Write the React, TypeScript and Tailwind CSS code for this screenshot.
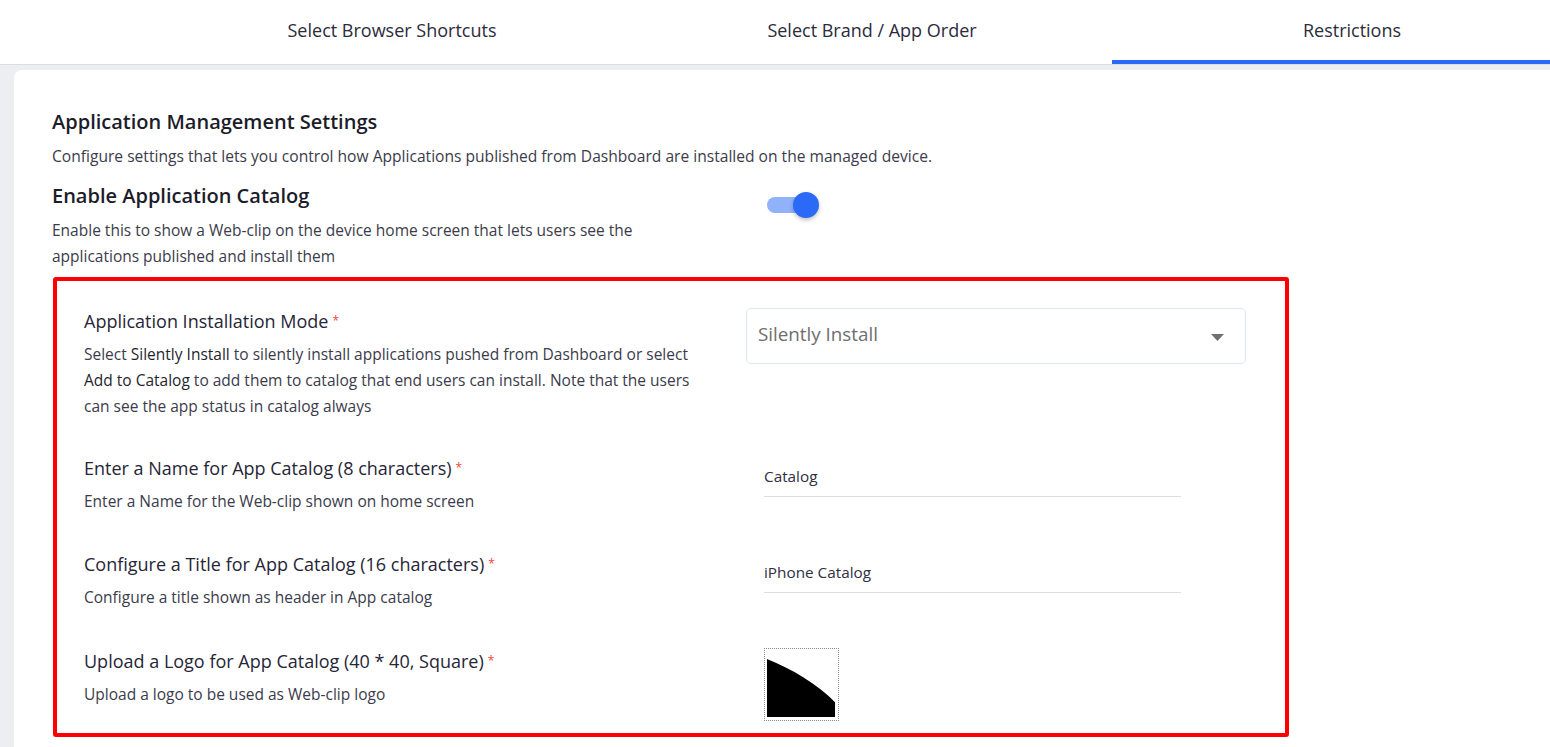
import React from "react";

// ── Data ─────────────────────────────────────────────────────────────────────

const TABS = [
  { id: "shortcuts", label: "Select Browser Shortcuts" },
  { id: "order", label: "Select Brand / App Order" },
  { id: "restrictions", label: "Restrictions" },
];

const ACTIVE_TAB = "restrictions";

// ── Sub-components ───────────────────────────────────────────────────────────

function Required() {
  return <span className="ml-[4px] text-[12px] text-[#f0443a] align-top">*</span>;
}

function FieldLabel({ title, children }: { title: string; children: React.ReactNode }) {
  return (
    <div className="w-[662px] shrink-0 pr-[37px]">
      <p className="text-[18px] leading-[26px] text-[#262637]">
        {title}
        <Required />
      </p>
      <p className="mt-[7px] text-[15.5px] leading-[26px] text-[#3b3b4b]">{children}</p>
    </div>
  );
}

function TextField({ value }: { value: string }) {
  return (
    <div className="self-start ml-[18px] w-[417px] pt-[10px] pb-[9px] border-b border-[#dedede] text-[15.3px] leading-[22px] text-[#2f2f3f]">
      {value}
    </div>
  );
}

function Toggle() {
  return (
    <div className="relative w-[54px] h-[28px] flex items-center">
      <div className="w-[40px] h-[16px] rounded-full bg-[#8fb2fb]" />
      <div className="absolute left-[26px] top-[1px] w-[26px] h-[26px] rounded-full bg-[#2a6af6] shadow-[0_2px_4px_rgba(0,0,0,0.25)]" />
    </div>
  );
}

function LogoPreview() {
  return (
    <div className="self-start ml-[18px] w-[75px] h-[73px] border-[1.5px] border-dotted border-[#8c8c8c] p-[2px]">
      <svg viewBox="0 0 69 67" width="68" height="66" preserveAspectRatio="none" className="block">
        <path d="M0 8 C 25 18 52 34 69 52 L69 67 L0 67 Z" fill="#000" />
      </svg>
    </div>
  );
}

// ── Main component ───────────────────────────────────────────────────────────

export default function App() {
  return (
    <div
      className="w-[1550px] h-[747px] overflow-hidden bg-[#eceef2]"
      style={{ fontFamily: "'Open Sans', 'Noto Sans', sans-serif" }}
    >
      {/* Tabs */}
      <div className="h-[65px] bg-white border-b border-[#dcdde1] flex pl-[152px]">
        {TABS.map((t) => (
          <div
            key={t.id}
            className={
              "w-[480px] shrink-0 h-full flex items-center justify-center text-[18px] text-[#2b2b3b] border-b-4 " +
              (t.id === ACTIVE_TAB ? "border-[#2a6af6]" : "border-transparent")
            }
          >
            {t.label}
          </div>
        ))}
      </div>

      {/* Card */}
      <div className="ml-[14px] mt-[5px] bg-white rounded-tl-[8px] h-[700px] pl-[38px] pt-[39px]">
        <h1 className="text-[20px] leading-[26px] font-semibold text-[#1c1c2a]">
          Application Management Settings
        </h1>
        <p className="mt-[10px] text-[15.6px] leading-[22px] text-[#3b3b4b]">
          Configure settings that lets you control how Applications published from Dashboard are
          installed on the managed device.
        </p>

        <div className="mt-[16px] flex">
          <div className="w-[715px] shrink-0">
            <h2 className="text-[20px] leading-[26px] font-semibold text-[#1c1c2a]">
              Enable Application Catalog
            </h2>
            <p className="mt-[8px] w-[600px] text-[15.5px] leading-[26px] text-[#3b3b4b]">
              Enable this to show a Web-clip on the device home screen that lets users see the
              applications published and install them
            </p>
          </div>
          <div className="mt-[8px]">
            <Toggle />
          </div>
        </div>

        {/* Catalog settings */}
        <div className="mt-[8px] ml-[1px] w-[1236px] border-4 border-[#ff0000] rounded-[3px] pl-[27px] pt-[27px] pb-[12px]">
          <div className="flex">
            <FieldLabel title="Application Installation Mode">
              Select <span className="text-[#1f1f2e]">Silently Install</span> to silently install
              applications pushed from Dashboard or select{" "}
              <span className="text-[#1f1f2e]">Add to Catalog</span> to add them to catalog that end
              users can install. Note that the users can see the app status in catalog always
            </FieldLabel>
            <div className="w-[500px] h-[56px] border border-[#dfe6f7] rounded-[5px] flex items-center justify-between pl-[11px] pr-[21px] pb-[4px]">
              <span className="text-[18.8px] text-[#6e6e6e]">Silently Install</span>
              <svg width="13" height="7" viewBox="0 0 13 7" className="mt-[7px]">
                <path d="M0 0 L13 0 L6.5 7 Z" fill="#707070" />
              </svg>
            </div>
          </div>

          <div className="flex mt-[36px]">
            <FieldLabel title="Enter a Name for App Catalog (8 characters)">
              Enter a Name for the Web-clip shown on home screen
            </FieldLabel>
            <TextField value="Catalog" />
          </div>

          <div className="flex mt-[37px]">
            <FieldLabel title="Configure a Title for App Catalog (16 characters)">
              Configure a title shown as header in App catalog
            </FieldLabel>
            <TextField value="iPhone Catalog" />
          </div>

          <div className="flex mt-[38px]">
            <FieldLabel title="Upload a Logo for App Catalog (40 * 40, Square)">
              Upload a logo to be used as Web-clip logo
            </FieldLabel>
            <LogoPreview />
          </div>
        </div>
      </div>
    </div>
  );
}
